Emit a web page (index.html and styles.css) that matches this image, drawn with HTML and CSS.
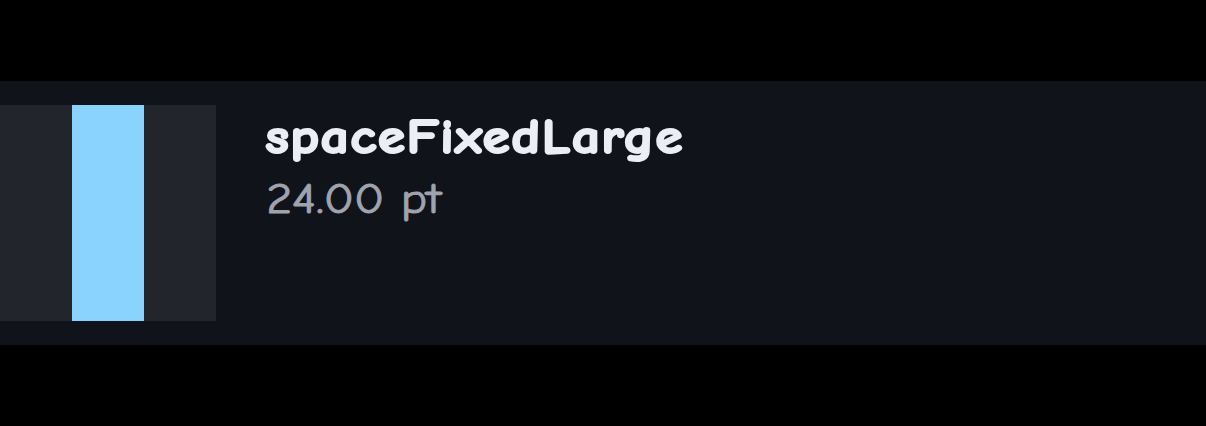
FILE: index.html
```html
<!DOCTYPE html>
<html lang="en">
<head>
<meta charset="utf-8">
<title>spaceFixedLarge</title>
<link rel="stylesheet" href="styles.css">
</head>
<body>
<main class="token-row">
  <div class="swatch"><div class="swatch-space"></div></div>
  <div class="details">
    <div><span class="token-name">spaceFixedLarge</span></div>
    <div><span class="token-value">24.00 pt</span></div>
  </div>
</main>
</body>
</html>
```

FILE: styles.css
```css
body {
  margin: 0;
  height: 426px;
  background: #000;
  display: flex;
  align-items: center;
  overflow: hidden;
}
.token-row {
  box-sizing: border-box;
  width: 100%;
  height: 264px;
  padding: 24px 0;
  display: flex;
  gap: 48px;
  background: #10131a;
  font-family: "Comic Neue", "Comic Sans MS", "Lato", sans-serif;
}
.swatch {
  width: 216px;
  height: 216px;
  display: flex;
  justify-content: center;
  background: #23252d;
}
.swatch-space {
  width: 72px;
  background: #8bd3ff;
}
.details {
  padding-top: 3px;
  white-space: nowrap;
}
.token-name {
  display: inline-block;
  padding-left: 1px;
  font-size: 48px;
  line-height: 60px;
  font-weight: 700;
  letter-spacing: 1.2px;
  color: #ebeef3;
  -webkit-text-stroke: 2px #ebeef3;
  stroke-linejoin: round;
  transform: scaleX(1.159);
  transform-origin: left;
}
.token-value {
  display: inline-block;
  padding-left: 2px;
  font-size: 42px;
  line-height: 63px;
  color: #a0a3ad;
  -webkit-text-stroke: 0.9px #a0a3ad;
  transform: scaleX(1.183);
  transform-origin: left;
}
```
